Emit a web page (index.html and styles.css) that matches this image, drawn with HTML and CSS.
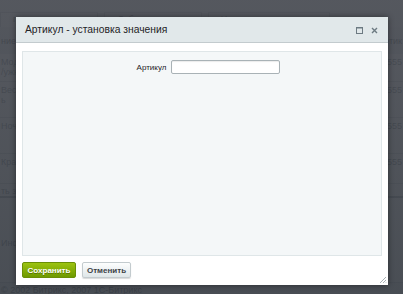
FILE: index.html
```html
<!DOCTYPE html>
<html lang="ru">
<head>
    <meta charset="UTF-8">
    <title>Артикул - установка значения</title>
    <link rel="stylesheet" href="styles.css">
</head>
<body>
    <div class="page">
        <div class="toolbar">
            <span class="tool">группы товаров &#9662;</span>
            <span class="tool">Добавить раздел</span>
            <span class="tool">На один уровень вверх</span>
        </div>
        <div class="grid-head">
            <span>ние</span>
            <span>Артик</span>
        </div>
        <div class="row r1"><span>Модн<br>/ужк</span><span>555</span></div>
        <div class="row r2"><span>Весе<br>ь</span><span>555</span></div>
        <div class="row r3"><span>Ночн</span><span>555</span></div>
        <div class="row r4"><span>Крас</span><span>555</span></div>
        <div class="row short"><span>ть зн</span><span></span></div>
        <div class="row info"><span>Инфо</span><span></span></div>
        <div class="footer">&copy; 2002 Битрикс, 2007 1С-Битрикс</div>
    </div>

    <div class="overlay"></div>

    <div class="dialog">
        <div class="dialog-head">
            <span class="dialog-title">Артикул - установка значения</span>
            <span class="head-icons">
                <svg width="7" height="7" viewBox="0 0 7 7"><rect x="0.5" y="0.5" width="6" height="6" fill="none" stroke="#6d7a82" stroke-width="1"/><line x1="0" y1="1" x2="7" y2="1" stroke="#6d7a82"/></svg>
                <svg width="7" height="7" viewBox="0 0 7 7"><path d="M1 1 L6 6 M6 1 L1 6" stroke="#6d7a82" stroke-width="1.4"/></svg>
            </span>
        </div>
        <div class="dialog-body">
            <div class="panel">
                <div class="field">
                    <label for="article">Артикул</label>
                    <input type="text" id="article">
                </div>
            </div>
        </div>
        <div class="dialog-buttons">
            <button class="btn btn-save">Сохранить</button>
            <button class="btn btn-cancel">Отменить</button>
        </div>
        <svg class="grip" width="8" height="8" viewBox="0 0 8 8"><path d="M7 1 L1 7 M7 4 L4 7 M7 6.5 L6.5 7" stroke="#a8b0b4" stroke-width="1"/></svg>
    </div>
</body>
</html>
```

FILE: styles.css
```css
body {
    margin: 0;
    font-family: 'Liberation Sans', Arial, sans-serif;
    width: 403px;
    height: 294px;
    overflow: hidden;
    position: relative;
    background-color: #eef1f2;
}

/* page under the dialog */
.page {
    font-size: 9px;
    color: #2c3237;
    height: 294px;
    overflow: hidden;
}

.toolbar {
    display: flex;
    gap: 6px;
    padding-top: 12px;
    height: 15px;
    background-color: #e9edee;
}

.tool {
    padding: 1px 12px;
    border: 1px solid #b8c0c4;
    border-bottom: none;
    background-color: #f2f4f5;
}

.grid-head {
    display: flex;
    justify-content: space-between;
    height: 27px;
    box-sizing: border-box;
    padding: 9px 1px 0 1px;
    background-color: #dfe5e8;
}

.row {
    display: flex;
    justify-content: space-between;
    box-sizing: border-box;
    padding: 3px 1px 0 1px;
    border-bottom: 1px solid #c9d0d3;
    background-color: #ffffff;
    color: #5a6870;
}

.r1 { height: 28px; }
.r2 { height: 36px; }
.r3 { height: 36px; }
.r4 { height: 30px; }

.row.short {
    height: 14px;
    padding-top: 2px;
    border-bottom: 2px solid #8a959b;
}

.row.info {
    height: 85px;
    padding-top: 40px;
}

.footer {
    padding: 2px 0 0 1px;
    color: #3a4248;
}

.overlay {
    position: absolute;
    left: 0;
    top: 0;
    width: 100%;
    height: 100%;
    background: linear-gradient(to bottom, rgba(72, 75, 82, 0.92), rgba(58, 63, 70, 0.92));
}

/* dialog */
.dialog {
    position: absolute;
    left: 16px;
    top: 17px;
    width: 372px;
    height: 268px;
    background-color: #ffffff;
    box-shadow: 0 0 6px rgba(0, 0, 0, 0.45);
    display: flex;
    flex-direction: column;
}

.dialog-head {
    height: 25px;
    display: flex;
    align-items: center;
    justify-content: space-between;
    padding: 0 10px 0 9px;
    background-color: #e1e8ea;
    border-bottom: 1px solid #c3cbce;
}

.dialog-title {
    font-size: 10.3px;
    color: #1f2326;
}

.head-icons {
    display: flex;
    gap: 8px;
    margin-top: 1px;
}

.dialog-body {
    padding: 8px 6px 0 6px;
}

.panel {
    height: 203px;
    background-color: #f4f7f8;
    border: 1px solid #dfe6e8;
}

.field {
    display: flex;
    align-items: center;
    justify-content: center;
    gap: 5px;
    padding-top: 8px;
    padding-left: 13px;
}

label {
    font-size: 8px;
    color: #1e2225;
}

input {
    width: 107px;
    height: 12px;
    padding: 0;
    border: 1px solid #a9b2b6;
    border-radius: 2px;
    background-color: #ffffff;
    box-shadow: inset 0 1px 1px rgba(0, 0, 0, 0.08);
}

.dialog-buttons {
    display: flex;
    gap: 6px;
    padding: 6px 6px 0 6px;
}

.btn {
    height: 16px;
    padding: 0;
    font-family: 'Liberation Sans', Arial, sans-serif;
    font-size: 8px;
    font-weight: bold;
    border-radius: 2px;
    cursor: pointer;
}

.btn-save {
    width: 54px;
    color: #ffffff;
    border: 1px solid #6a8f06;
    background: linear-gradient(to bottom, #9cc310, #6f9a00);
    text-shadow: 0 1px 0 rgba(0, 0, 0, 0.3);
}

.btn-cancel {
    width: 49px;
    color: #3c4246;
    border: 1px solid #c3cbce;
    background: linear-gradient(to bottom, #fdfefe, #dfe6e8);
    box-shadow: 0 1px 1px rgba(0, 0, 0, 0.15);
}

.grip {
    position: absolute;
    right: 1px;
    bottom: 1px;
}
```
